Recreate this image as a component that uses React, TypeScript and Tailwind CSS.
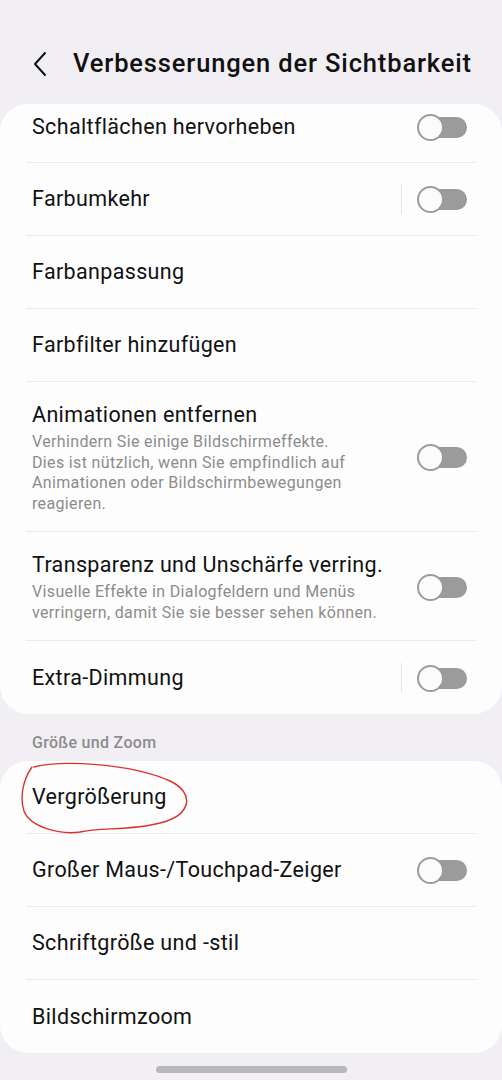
import React from "react";

type Row = {
  title: string;
  sub?: string[];
  toggle?: boolean;
  divider?: boolean;
  h?: string;
};

const card1: Row[] = [
  // partly scrolled under the header
  { title: "Schaltflächen hervorheben", toggle: true, h: "h-[59px] pb-[13px]" },
  { title: "Farbumkehr", toggle: true, divider: true },
  { title: "Farbanpassung" },
  { title: "Farbfilter hinzufügen" },
  {
    title: "Animationen entfernen",
    sub: [
      "Verhindern Sie einige Bildschirmeffekte.",
      "Dies ist nützlich, wenn Sie empfindlich auf",
      "Animationen oder Bildschirmbewegungen",
      "reagieren.",
    ],
    toggle: true,
  },
  {
    title: "Transparenz und Unschärfe verring.",
    sub: [
      "Visuelle Effekte in Dialogfeldern und Menüs",
      "verringern, damit Sie sie besser sehen können.",
    ],
    toggle: true,
  },
  { title: "Extra-Dimmung", toggle: true, divider: true },
];

const card2: Row[] = [
  { title: "Vergrößerung" },
  { title: "Großer Maus-/Touchpad-Zeiger", toggle: true },
  { title: "Schriftgröße und -stil" },
  { title: "Bildschirmzoom" },
];

function Toggle() {
  return (
    <div className="relative h-[26px] w-[50px] shrink-0">
      <div className="absolute left-[10px] right-0 top-[3px] h-[21px] rounded-full bg-[#9b9b9b]" />
      <div className="absolute left-0 top-0 h-[27px] w-[27px] rounded-full border-2 border-[#9b9b9b] bg-[#fbfbfb]" />
    </div>
  );
}

function SettingRow({ row, last }: { row: Row; last: boolean }) {
  return (
    <div className="px-[26px]">
      <div
        className={`flex items-center ${row.h ?? (row.sub ? "" : "h-[73px]")} ${
          row.sub ? "pb-[17px] pt-[18px]" : ""
        } ${last ? "" : "border-b border-[#ebebeb]"}`}
      >
        <div className="min-w-0 flex-1 pl-[6px]">
          <div className="whitespace-nowrap text-[21.5px] leading-[30px] tracking-[0.35px] text-[#111111]">
            {row.title}
          </div>
          {row.sub && (
            <div className="mt-[2px] text-[16px] leading-[20.5px] tracking-[0.35px] text-[#8c8c8c]">
              {row.sub.map((l) => (
                <div key={l} className="whitespace-nowrap">
                  {l}
                </div>
              ))}
            </div>
          )}
        </div>
        {row.divider && <div className="mr-[15px] h-[30px] w-px bg-[#e4e4e4]" />}
        {row.toggle && (
          <div className="mr-[9px]">
            <Toggle />
          </div>
        )}
      </div>
    </div>
  );
}

export default function App() {
  return (
    <div
      className="relative h-[1080px] w-[502px] overflow-hidden bg-[#f1eff3]"
      style={{ fontFamily: "Roboto, 'Noto Sans', sans-serif" }}
    >
      <div className="flex h-[104px] items-start pt-[43px]">
        <svg className="ml-[30px] mt-[7px]" width="20" height="28" viewBox="0 0 20 28" fill="none">
          <path d="M15 3 L5 14 L15 25" stroke="#111" strokeWidth="2" strokeLinecap="round" strokeLinejoin="round" />
        </svg>
        <h1 className="ml-[23px] whitespace-nowrap text-[25.5px] font-medium leading-[40px] tracking-[0.85px] text-[#111111]">
          Verbesserungen der Sichtbarkeit
        </h1>
      </div>

      <div className="rounded-[28px] bg-[#fdfdfd]">
        {card1.map((r, i) => (
          <SettingRow key={r.title} row={r} last={i === card1.length - 1} />
        ))}
      </div>

      <div className="px-[32px] pb-[8px] pt-[19px] text-[16px] font-medium leading-[20px] tracking-[0.3px] text-[#8c8c8c]">
        Größe und Zoom
      </div>

      <div className="relative rounded-[28px] bg-[#fdfdfd]">
        {card2.map((r, i) => (
          <SettingRow key={r.title} row={r} last={i === card2.length - 1} />
        ))}
        <svg
          className="pointer-events-none absolute left-[20px] top-[0px]"
          width="172"
          height="74"
          viewBox="0 0 172 74"
          fill="none"
        >
          <path
            d="M14 6 C40 -1 110 2 150 20 C175 32 172 54 140 62 C110 70 80 66 60 71 C40 74 10 66 4 50 C0 38 2 20 12 6"
            stroke="#d9332f"
            strokeWidth="1.4"
            strokeLinecap="round"
          />
        </svg>
      </div>

      <div className="mt-[13px] flex justify-center">
        <div className="h-[7px] w-[191px] rounded-full bg-[#b8b7bc]" />
      </div>
    </div>
  );
}
